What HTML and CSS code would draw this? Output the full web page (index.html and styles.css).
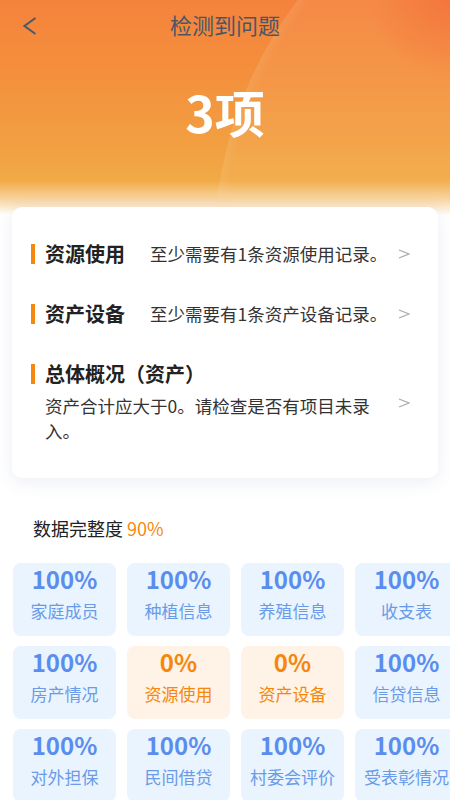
FILE: index.html
```html
<!DOCTYPE html>
<html lang="zh-CN">

<head>
    <meta charset="UTF-8">
    <meta name="viewport" content="width=device-width, initial-scale=1.0">
    <title>检测到问题</title>
    <link rel="stylesheet" href="styles.css">
</head>

<body>
    <div class="top">
        <div class="arc"></div>
        <div class="nav">
            <svg class="back" width="14" height="18" viewBox="0 0 14 18">
                <polyline points="12.5,1 1.5,9 12.5,17" fill="none" stroke="#4b5a6b" stroke-width="2" />
            </svg>
            <span class="navtitle">检测到问题</span>
        </div>
        <div class="count">3项</div>
    </div>

    <div class="card">
        <div class="row">
            <div class="main inline">
                <div class="name">资源使用</div>
                <div class="desc">至少需要有1条资源使用记录。</div>
            </div>
            <svg class="arrow" width="12" height="10" viewBox="0 0 12 10">
                <polyline points="1,1 11,5 1,9" fill="none" stroke="#aaaaaa" stroke-width="1.3" />
            </svg>
        </div>
        <div class="row">
            <div class="main inline">
                <div class="name">资产设备</div>
                <div class="desc">至少需要有1条资产设备记录。</div>
            </div>
            <svg class="arrow" width="12" height="10" viewBox="0 0 12 10">
                <polyline points="1,1 11,5 1,9" fill="none" stroke="#aaaaaa" stroke-width="1.3" />
            </svg>
        </div>
        <div class="row">
            <div class="main">
                <div class="name">总体概况（资产）</div>
                <div class="desc block">资产合计应大于0。请检查是否有项目未录入。</div>
            </div>
            <svg class="arrow" width="12" height="10" viewBox="0 0 12 10">
                <polyline points="1,1 11,5 1,9" fill="none" stroke="#aaaaaa" stroke-width="1.3" />
            </svg>
        </div>
    </div>

    <div class="rate">数据完整度 <span>90%</span></div>

    <div class="grid">
        <div class="tile"><b>100%</b><span>家庭成员</span></div>
        <div class="tile"><b>100%</b><span>种植信息</span></div>
        <div class="tile"><b>100%</b><span>养殖信息</span></div>
        <div class="tile"><b>100%</b><span>收支表</span></div>
        <div class="tile"><b>100%</b><span>房产情况</span></div>
        <div class="tile warn"><b>0%</b><span>资源使用</span></div>
        <div class="tile warn"><b>0%</b><span>资产设备</span></div>
        <div class="tile"><b>100%</b><span>信贷信息</span></div>
        <div class="tile"><b>100%</b><span>对外担保</span></div>
        <div class="tile"><b>100%</b><span>民间借贷</span></div>
        <div class="tile"><b>100%</b><span>村委会评价</span></div>
        <div class="tile"><b>100%</b><span>受表彰情况</span></div>
    </div>
</body>

</html>
```

FILE: styles.css
```css
html,
body {
    margin: 0;
    width: 450px;
    height: 800px;
    overflow: hidden;
    background-color: #ffffff;
    font-family: "Noto Sans CJK SC", "Noto Sans", sans-serif;
}

.top {
    position: relative;
    height: 215px;
    overflow: hidden;
    background:
        radial-gradient(circle at 100% 0%, rgba(240, 95, 45, 0.6) 0px, rgba(242, 110, 50, 0) 80px),
        linear-gradient(180deg, #f5823c 0%, #f4903d 35%, #f29e41 65%, #f1aa46 84%, #f8d6a4 93%, #ffffff 100%);
}

.arc {
    position: absolute;
    left: 214px;
    top: -165px;
    width: 830px;
    height: 830px;
    border-radius: 50%;
    background: rgba(255, 225, 190, 0.08);
    box-shadow: inset 6px 0 10px rgba(255, 220, 170, 0.12);
}

.nav {
    position: relative;
    height: 48px;
    display: flex;
    align-items: center;
    justify-content: center;
}

.back {
    position: absolute;
    left: 23px;
    top: 17px;
}

.navtitle {
    font-size: 22px;
    color: #4c5666;
}

.count {
    position: relative;
    margin-top: 33px;
    text-align: center;
    font-size: 50px;
    line-height: 60px;
    font-weight: bold;
    color: #ffffff;
}

.card {
    position: relative;
    margin: -8px 12px 0;
    padding: 17px 28px 17px 19px;
    background-color: #ffffff;
    border-radius: 10px;
    box-shadow: 0 4px 18px rgba(70, 90, 150, 0.1);
}

.row {
    display: flex;
    align-items: center;
    padding: 18px 0;
}

.main {
    flex: 1;
}

.main.inline {
    display: flex;
    align-items: center;
}

.name {
    display: flex;
    align-items: center;
    font-size: 20px;
    line-height: 24px;
    font-weight: bold;
    color: #222222;
}

.inline .name {
    width: 119px;
    flex-shrink: 0;
}

.name::before {
    content: "";
    width: 4px;
    height: 20px;
    margin-right: 10px;
    background-color: #f5880f;
}

.desc {
    font-size: 17.5px;
    line-height: 24px;
    color: #333333;
}

.desc.block {
    margin-top: 7px;
    padding-left: 14px;
    width: 334px;
    line-height: 25px;
}

.arrow {
    flex-shrink: 0;
}

.rate {
    margin: 38px 0 0 33px;
    font-size: 18px;
    line-height: 24px;
    color: #222222;
}

.rate span {
    color: #f5880f;
}

.grid {
    display: grid;
    grid-template-columns: repeat(4, 103px);
    grid-auto-rows: 73px;
    gap: 10px 11px;
    margin: 23px 0 0 13px;
}

.tile {
    display: flex;
    flex-direction: column;
    align-items: center;
    padding-top: 2px;
    border-radius: 8px;
    background-color: #e9f4fe;
    color: #6a9be8;
}

.tile b {
    font-size: 24px;
    line-height: 28px;
    color: #5b8def;
}

.tile span {
    margin-top: 6px;
    font-size: 17px;
    line-height: 24px;
    white-space: nowrap;
}

.tile.warn {
    background-color: #fef3e6;
    color: #f5870d;
}

.tile.warn b {
    color: #f5870d;
}
```
